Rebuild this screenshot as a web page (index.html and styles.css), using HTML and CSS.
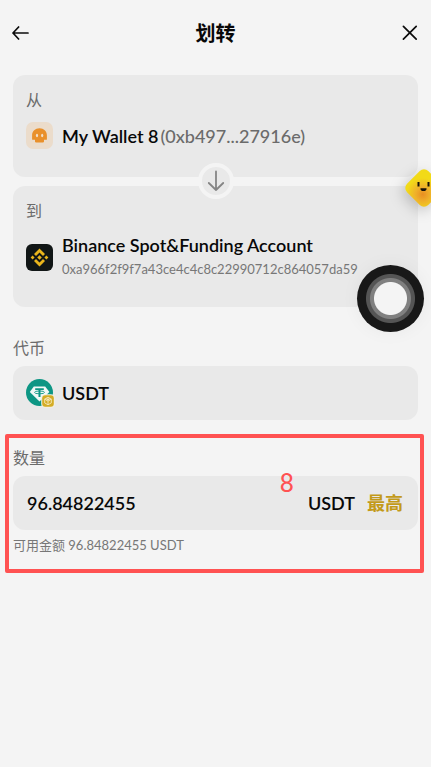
FILE: index.html
```html
<!DOCTYPE html>
<html lang="zh-CN">
<head>
<meta charset="utf-8">
<meta name="viewport" content="width=device-width, initial-scale=1">
<title>划转</title>
<link rel="stylesheet" href="styles.css">
</head>
<body>
<header class="topbar">
  <button class="icon-button" type="button" aria-label="返回">
    <svg width="18" height="18" viewBox="0 0 18 18" fill="none" stroke="#0b0b0b" stroke-width="1.7" stroke-linecap="round" stroke-linejoin="round"><path d="M16 9H1M6.6 3L1 9L6.6 15"/></svg>
  </button>
  <h1 class="title">划转</h1>
  <button class="icon-button" type="button" aria-label="关闭">
    <svg width="18" height="18" viewBox="0 0 18 18" fill="none" stroke="#0b0b0b" stroke-width="1.7" stroke-linecap="round"><path d="M2.4 2.4L15.2 15.2M15.2 2.4L2.4 15.2"/></svg>
  </button>
</header>

<main class="content">
  <div class="route">
    <section class="card from">
      <h2 class="label">从</h2>
      <div class="account">
        <svg class="avatar" viewBox="0 0 27 27"><rect width="27" height="27" rx="7" fill="#ebdccb"/><path d="M13.5 6.2C9.2 6.2 6.1 9.3 6.1 13.2V17.2Q6.1 17.8 6.7 17.8H9V19.6Q9 20.4 9.8 20.4H17.2Q18 20.4 18 19.6V17.8H20.3Q20.9 17.8 20.9 17.2V13.2C20.9 9.3 17.8 6.2 13.5 6.2Z" fill="#e9902b"/><ellipse cx="11" cy="13.5" rx="1.1" ry="1.8" fill="#f1dfca"/><ellipse cx="16.2" cy="13.5" rx="1.1" ry="1.8" fill="#f1dfca"/></svg>
        <p class="name">My Wallet 8<span class="short">(0xb497...27916e)</span></p>
      </div>
    </section>
    <button class="direction" type="button" aria-label="交换方向">
      <svg width="20" height="22" viewBox="0 0 20 22" fill="none" stroke="#858585" stroke-width="1.8" stroke-linecap="round" stroke-linejoin="round"><path d="M10 1.5V20M2.8 13L10 20L17.2 13"/></svg>
    </button>
    <section class="card to">
      <h2 class="label">到</h2>
      <div class="account">
        <svg class="avatar" viewBox="0 0 27 27"><rect width="27" height="27" rx="6" fill="#111616"/><g fill="#eab51c"><path d="M13.5 4.5L19 10L17 12L13.5 8.5L10 12L8 10Z"/><path d="M13.5 22.5L8 17L10 15L13.5 18.5L17 15L19 17Z"/><path d="M13.5 11.2L15.8 13.5L13.5 15.8L11.2 13.5ZM6.6 11.5L8.6 13.5L6.6 15.5L4.6 13.5ZM20.4 11.5L22.4 13.5L20.4 15.5L18.4 13.5Z"/></g></svg>
        <div>
          <p class="name">Binance Spot&amp;Funding Account</p>
          <p class="address">0xa966f2f9f7a43ce4c4c8c22990712c864057da59</p>
        </div>
      </div>
    </section>
  </div>

  <section class="field">
    <h2 class="label">代币</h2>
    <button class="box token" type="button">
      <svg class="coin" viewBox="0 0 29 29"><circle cx="13.5" cy="13.5" r="13.5" fill="#0d9684"/><path d="M7.8 7.5H19.2L23.4 13L13.5 22.4L3.8 13Z" fill="#f1f8f6"/><path d="M9.2 9.2H17.8V11H14.5V18H12.5V11H9.2Z" fill="#0d9684"/><ellipse cx="13.5" cy="13.4" rx="5" ry="1.4" fill="none" stroke="#0d9684" stroke-width=".9"/><rect x="15.2" y="15.2" width="13.6" height="13.6" rx="4" fill="#f5f0df"/><rect x="16.2" y="16.2" width="11.6" height="11.6" rx="3" fill="#d4ac25"/><path d="M22 18.2L25.3 20.1V23.9L22 25.8L18.7 23.9V20.1ZM18.7 20.1L22 22L25.3 20.1M22 22V25.8M20.3 19.3L23.7 21.2M23.7 19.3L20.3 21.2" fill="none" stroke="#f6e9bc" stroke-width=".9"/></svg>
      <span>USDT</span>
    </button>
  </section>

  <section class="field marked">
    <label class="label" for="amount">数量</label>
    <div class="box">
      <input class="amount" id="amount" type="text" inputmode="decimal" value="96.84822455">
      <span>USDT</span>
      <button class="max" type="button">最高</button>
    </div>
    <p class="hint">可用金额 96.84822455 USDT</p>
    <span class="step">8</span>
  </section>
</main>

<button class="mascot" type="button" aria-label="助手">
  <svg width="42" height="42" viewBox="0 0 42 42"><defs><radialGradient id="glow" cx=".62" cy=".68" r=".55"><stop offset="0" stop-color="#e98e22"/><stop offset=".45" stop-color="#efb12a"/><stop offset="1" stop-color="#f2da17"/></radialGradient></defs><rect x="6" y="6" width="30" height="30" rx="6" transform="rotate(45 21 21)" fill="url(#glow)"/><path d="M14.5 15H16.5V19.5H14.5ZM24.5 15H26.5V19.5H24.5ZM17.5 21.3H23.5V22.5L22.1 23.9H18.9L17.5 22.5Z" fill="#17130a"/></svg>
</button>
<button class="touch" type="button" aria-label="辅助触控"></button>
</body>
</html>
```

FILE: styles.css
```css
* {
  box-sizing: border-box;
}

body {
  position: relative;
  min-height: 100vh;
  margin: 0;
  overflow-x: hidden;
  background: #f4f4f4;
  color: #080808;
  font: 500 18px/24px Lato, "Noto Sans CJK SC", sans-serif;
}

h1, h2, p {
  margin: 0;
}

button, input {
  padding: 0;
  border: 0;
  background: none;
  color: inherit;
  font: inherit;
}

svg {
  display: block;
  flex: none;
}

.topbar {
  display: flex;
  align-items: center;
  justify-content: space-between;
  height: 65px;
  padding: 0 12px;
}

.title {
  font-size: 20px;
  font-weight: 700;
}

.content {
  padding: 10px 13px 0;
}

.route {
  position: relative;
  display: grid;
  gap: 9px;
}

.card {
  padding: 13px;
  border-radius: 12px;
  background: #e9e9e9;
}

.from {
  height: 102px;
}

.to {
  height: 121px;
}

.label {
  display: block;
  color: #6b6b6b;
  font-size: 16px;
  font-weight: 400;
  line-height: 24px;
}

.account {
  display: flex;
  align-items: center;
  gap: 9px;
  margin-top: 10px;
}

.avatar {
  width: 27px;
  height: 27px;
}

.name {
  font-weight: 600;
}

.short {
  margin-left: 2px;
  color: #6b6b6b;
  font-weight: 500;
}

.address {
  color: #777;
  font-size: 13px;
  font-weight: 400;
}

.direction {
  position: absolute;
  top: 88px;
  left: 50%;
  display: grid;
  place-items: center;
  width: 36px;
  height: 36px;
  border: 4px solid #f4f4f4;
  border-radius: 50%;
  background: #e9e9e9;
  transform: translateX(-50%);
}

.field {
  margin-top: 29px;
}

.box {
  display: flex;
  align-items: center;
  width: 100%;
  height: 54px;
  margin-top: 6px;
  padding: 0 15px 0 14px;
  border-radius: 12px;
  background: #e9e9e9;
  font-weight: 600;
}

.token {
  gap: 7px;
  padding-left: 13px;
}

.coin {
  width: 29px;
  height: 29px;
}

.marked {
  position: relative;
  margin-top: 26px;
}

.marked::before {
  content: "";
  position: absolute;
  inset: -12px -6px -16px -8px;
  border: 4px solid #ff5252;
  border-radius: 2px;
  pointer-events: none;
}

.amount {
  flex: 1;
  min-width: 0;
  outline: none;
}

.max {
  margin-left: 12px;
  color: #c39a19;
}

.hint {
  margin-top: 3px;
  color: #777;
  font-size: 13px;
  font-weight: 400;
}

.step {
  position: absolute;
  top: 22px;
  right: 124px;
  color: #ff5252;
  font: 400 26px/30px Roboto, sans-serif;
}

.mascot {
  position: absolute;
  top: 167px;
  right: -14px;
  filter: drop-shadow(-3px 4px 7px rgb(0 0 0 / 20%));
}

.touch {
  position: absolute;
  top: 265px;
  right: 7px;
  width: 67px;
  height: 67px;
  border-radius: 50%;
  background: radial-gradient(circle, #f4f4f4 16px, #808080 17px 20px, #555 21px 24px, #181818 25px);
  box-shadow: 0 0 18px rgb(0 0 0 / 5%);
}
```
